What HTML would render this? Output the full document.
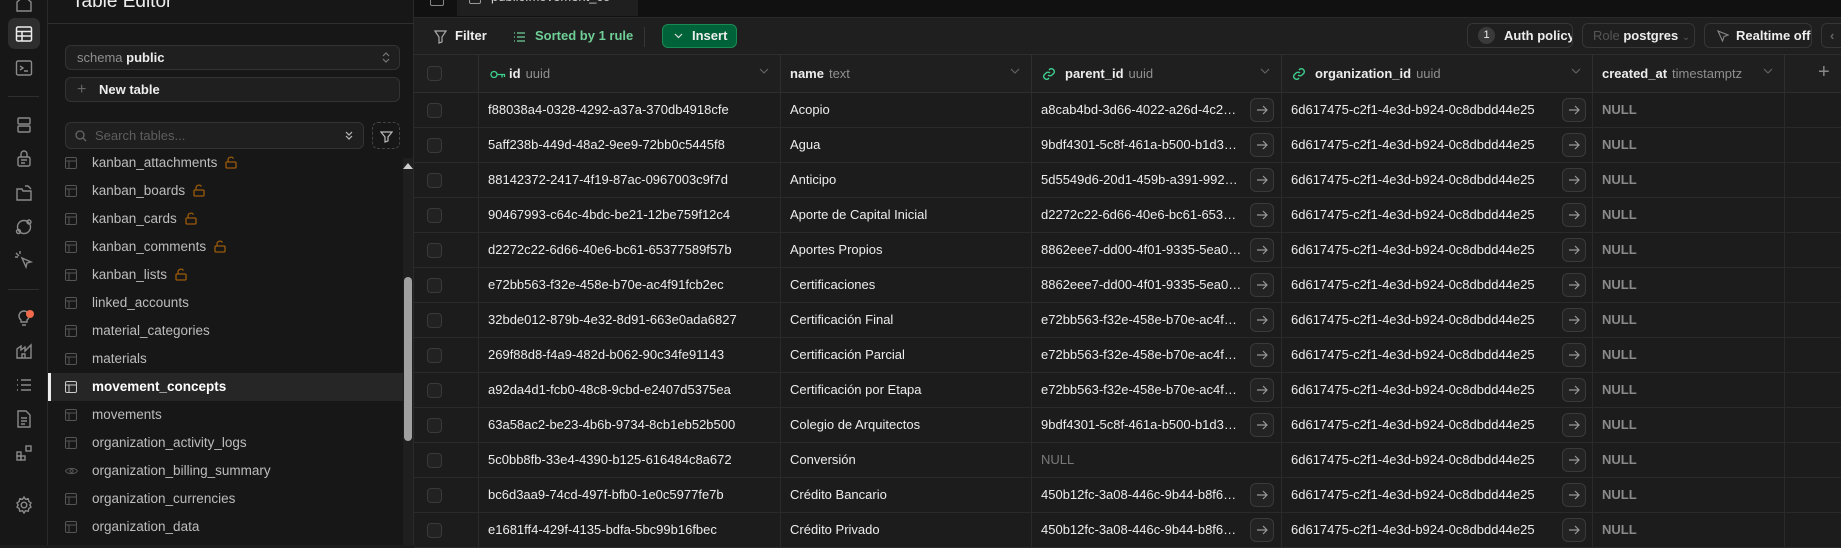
<!DOCTYPE html>
<html><head><meta charset="utf-8"><style>
*{box-sizing:border-box;margin:0;padding:0}
body{width:1841px;height:545px;overflow:hidden;background:#1c1c1c;font-family:"Liberation Sans",sans-serif;color:#ededed;position:relative}
.abs{position:absolute}
.rail{left:0;top:0;width:48px;height:545px;background:#171717;border-right:1px solid #2a2a2a}
.ri{position:absolute;left:14px;width:20px;height:20px}
.panel{left:48px;top:0;width:366px;height:545px;background:#171717;border-right:1px solid #2a2a2a}
.box{position:absolute;background:#1f1f1f;border:1px solid #333;border-radius:6px;font-size:13px}
.item{position:absolute;left:0;width:355px;height:28px;font-size:13.5px;color:#bdbdbd;line-height:28px;padding-left:44px;white-space:nowrap}
.item .ti{position:absolute;top:8px}
.lock{display:inline-block;margin-left:8px;vertical-align:-2px;position:static}
.main{left:414px;top:0;width:1427px;height:545px;background:#1c1c1c}
.tabbar{left:414px;top:0;width:1427px;height:18px;background:#111;border-bottom:1px solid #2a2a2a}
.toolbar{left:414px;top:18px;width:1427px;height:37px;background:#1f1f1f;border-bottom:1px solid #2e2e2e}
.btn{position:absolute;top:23px;height:25px;border:1px solid #363636;border-radius:6px;font-size:13px;line-height:23px;color:#ededed;font-weight:bold;background:#1f1f1f;white-space:nowrap;overflow:hidden}
.hdr{left:414px;top:55px;width:1427px;height:38px;background:#1f1f1f;border-bottom:1px solid #2e2e2e}
.col{position:absolute;top:0;height:100%;border-right:1px solid #2e2e2e}
.row{position:absolute;left:414px;width:1427px;height:35px;border-bottom:1px solid #2a2a2a;font-size:13px}
.c{position:absolute;top:0;height:35px;line-height:34px;border-right:1px solid #2a2a2a;padding-left:9px;white-space:nowrap;overflow:hidden}
.cb{position:absolute;left:13px;top:10px;width:15px;height:15px;border:1px solid #3a3a3a;border-radius:4px;background:#222}
.ar{position:absolute;top:5px;width:24px;height:24px;border:1px solid #3a3a3a;border-radius:6px;background:#232323}
.ar svg{position:absolute;left:5px;top:5px}
.null{color:#7a7a7a}
.hc{font-size:13px;font-weight:bold;line-height:37px;padding-left:9px;position:absolute;top:0;white-space:nowrap}
.hc span{font-weight:normal;color:#8f8f8f;margin-left:5px}
.chev{position:absolute;top:13px}
.tr{display:inline-block;width:202px;overflow:hidden;text-overflow:ellipsis;vertical-align:top}
</style></head><body>
<div class="abs rail">
 <svg class="ri" style="top:-7px" viewBox="0 0 20 20" fill="none" stroke="#8a8a8a" stroke-width="1.4"><path d="M3 9l7-6 7 6v9H3z"/></svg>
 <div class="abs" style="left:8px;top:18px;width:32px;height:31px;background:#2e2e2e;border-radius:7px"></div>
 <svg class="ri" style="top:24px" viewBox="0 0 20 20" fill="none" stroke="#ededed" stroke-width="1.5"><rect x="2.5" y="3" width="15" height="14" rx="1.5"/><path d="M2.5 7.5h15M2.5 12h15M8 7.5V17"/></svg>
 <svg class="ri" style="top:58px" viewBox="0 0 20 20" fill="none" stroke="#8a8a8a" stroke-width="1.4"><rect x="2.5" y="3" width="15" height="14" rx="1.5"/><path d="M6 8l3 2-3 2M10 13h4"/></svg>
 <div class="abs" style="left:8px;top:96px;width:31px;height:1px;background:#2e2e2e"></div>
 <svg class="ri" style="top:115px" viewBox="0 0 20 20" fill="none" stroke="#8a8a8a" stroke-width="1.4"><rect x="4" y="3" width="12" height="6" rx="1"/><rect x="4" y="11" width="12" height="6" rx="1"/></svg>
 <svg class="ri" style="top:148px" viewBox="0 0 20 20" fill="none" stroke="#8a8a8a" stroke-width="1.4"><rect x="4" y="9" width="12" height="9" rx="1.5"/><path d="M7 9V6a3 3 0 016 0v3M7 12h6M7 15h4"/></svg>
 <svg class="ri" style="top:183px" viewBox="0 0 20 20" fill="none" stroke="#8a8a8a" stroke-width="1.4"><path d="M3 6h5l1 2h8v9H3zM11 3h3l3 3"/></svg>
 <svg class="ri" style="top:217px" viewBox="0 0 20 20" fill="none" stroke="#8a8a8a" stroke-width="1.4"><circle cx="10" cy="10" r="6.5"/><circle cx="15" cy="5" r="2"/><circle cx="4.5" cy="14.5" r="2"/></svg>
 <svg class="ri" style="top:250px" viewBox="0 0 20 20" fill="none" stroke="#8a8a8a" stroke-width="1.4"><path d="M8 8l9 4-4 1-1 4zM2 3l3 3M6 1v3M1 7h3"/></svg>
 <div class="abs" style="left:8px;top:289px;width:31px;height:1px;background:#2e2e2e"></div>
 <svg class="ri" style="top:307px" viewBox="0 0 20 20" fill="none" stroke="#8a8a8a" stroke-width="1.4"><path d="M7 13a5 5 0 116 0v2H7zM8 18h4"/></svg>
 <div class="abs" style="left:26px;top:310px;width:8px;height:8px;border-radius:50%;background:#f06a4b"></div>
 <svg class="ri" style="top:341px" viewBox="0 0 20 20" fill="none" stroke="#8a8a8a" stroke-width="1.4"><path d="M3 17V8l4-3v4l4-3v4l6-6v13zM8 17v-4h3v4"/></svg>
 <svg class="ri" style="top:375px" viewBox="0 0 20 20" fill="none" stroke="#8a8a8a" stroke-width="1.4"><path d="M3 5h1M3 10h1M3 15h1M7 5h10M7 10h10M7 15h10"/></svg>
 <svg class="ri" style="top:409px" viewBox="0 0 20 20" fill="none" stroke="#8a8a8a" stroke-width="1.4"><path d="M4 2h8l4 4v12H4zM7 9h6M7 12h6M7 15h4"/></svg>
 <svg class="ri" style="top:443px" viewBox="0 0 20 20" fill="none" stroke="#8a8a8a" stroke-width="1.4"><rect x="3" y="9" width="4" height="4"/><rect x="3" y="13" width="4" height="4"/><rect x="7" y="13" width="4" height="4"/><rect x="12" y="3" width="5" height="5"/></svg>
 <svg class="ri" style="top:495px" viewBox="0 0 20 20" fill="none" stroke="#8a8a8a" stroke-width="1.4"><circle cx="10" cy="10" r="2.8"/><path d="M10 2l1.5 2.3 2.7-.6.6 2.7L17 8l-1.2 2 1.2 2-2.2 1.6-.6 2.7-2.7-.6L10 18l-1.5-2.3-2.7.6-.6-2.7L3 12l1.2-2L3 8l2.2-1.6.6-2.7 2.7.6z"/></svg>
</div>
<div class="abs panel">
 <div class="abs" style="left:0;top:0;width:366px;height:24px;border-bottom:1px solid #2e2e2e"></div>
 <div class="abs" style="left:24px;top:-9px;font-size:19px;color:#ededed">Table Editor</div>
 <div class="box" style="left:17px;top:45px;width:335px;height:25px;line-height:23px;padding-left:11px"><span style="color:#8f8f8f">schema</span> <b>public</b>
  <svg class="abs" style="right:8px;top:5px" width="10" height="13" viewBox="0 0 10 13" fill="none" stroke="#777" stroke-width="1.2"><path d="M2 5l3-3 3 3M2 8l3 3 3-3"/></svg></div>
 <div class="box" style="left:17px;top:77px;width:335px;height:25px;line-height:23px;padding-left:33px;font-weight:bold">New table
  <span class="abs" style="left:11px;top:0;color:#666;font-weight:normal;font-size:16px">+</span></div>
 <div class="box" style="left:17px;top:122px;width:299px;height:27px;line-height:25px;padding-left:29px;color:#5e5e5e">Search tables...
  <svg class="abs" style="left:9px;top:7px" width="12" height="12" viewBox="0 0 12 12" fill="none" stroke="#666" stroke-width="1.3"><circle cx="5" cy="5" r="4"/><path d="M8 8l3 3"/></svg>
  <svg class="abs" style="right:9px;top:7px" width="10" height="12" viewBox="0 0 10 12" fill="none" stroke="#bbb" stroke-width="1.2"><path d="M2 2l3 3 3-3M2 6l3 3 3-3"/></svg></div>
 <div class="abs" style="left:324px;top:122px;width:28px;height:27px;border:1px dashed #444;border-radius:6px">
  <svg class="abs" style="left:7px;top:7px" width="13" height="13" viewBox="0 0 13 13" fill="none" stroke="#bbb" stroke-width="1.2"><path d="M1 2h11L8 7v4l-3 1V7z"/></svg></div>
 <div class="abs" style="left:355px;top:158px;width:10px;height:387px;background:#1f1f1f"></div>
 <div class="abs" style="left:356px;top:277px;width:8px;height:164px;background:#a0a0a0;border-radius:4px"></div>
 <div class="abs" style="left:355px;top:163px;width:0;height:0;border-left:5px solid transparent;border-right:5px solid transparent;border-bottom:6px solid #ccc"></div>
 <div id="list"></div>
</div>
<div class="abs tabbar"></div>
<div class="abs" style="left:430px;top:-8px;width:14px;height:14px;border:1.4px solid #888;border-radius:2px"></div>
<div class="abs" style="left:457px;top:0;width:181px;height:16px;background:#1f1f1f;overflow:hidden"><div style="position:absolute;left:12px;top:-8px;width:12px;height:12px;border:1.4px solid #999;border-radius:2px"></div><div style="position:absolute;left:34px;top:-11px;font-size:13px;color:#ccc;white-space:nowrap">public.movement_co</div></div>
<div class="abs toolbar"></div>
<svg class="abs" style="left:434px;top:30px" width="13" height="14" viewBox="0 0 13 14" fill="none" stroke="#aaa" stroke-width="1.2"><path d="M1 1h11L8 7v5l-3 1V7z"/></svg>
<div class="abs" style="left:455px;top:28px;font-size:13px;font-weight:bold;color:#ededed">Filter</div>
<svg class="abs" style="left:513px;top:31px" width="13" height="12" viewBox="0 0 13 12" fill="none" stroke="#6fcf97" stroke-width="1.2"><path d="M1 2h1M1 6h1M1 10h1M4 2h8M4 6h8M4 10h8"/></svg>
<div class="abs" style="left:535px;top:28px;font-size:13px;font-weight:bold;color:#6fcf97">Sorted by 1 rule</div>
<div class="abs" style="left:644px;top:27px;width:1px;height:20px;background:#363636"></div>
<div class="abs" style="left:662px;top:24px;width:75px;height:24px;background:#006239;border:1px solid #1a8a55;border-radius:6px;font-size:13px;font-weight:bold;line-height:22px;padding-left:29px;color:#ededed">Insert
 <svg class="abs" style="left:11px;top:8px" width="9" height="6" viewBox="0 0 9 6" fill="none" stroke="#ddd" stroke-width="1.2"><path d="M1 1l3.5 3.5L8 1"/></svg></div>
<div class="btn" style="left:1467px;width:106px;padding-left:36px">Auth policy<div class="abs" style="left:10px;top:3px;width:17px;height:17px;border-radius:50%;background:#3a3a3a;font-size:11px;line-height:17px;text-align:center;font-weight:normal">1</div></div>
<div class="btn" style="left:1582px;width:113px;padding-left:10px"><span style="color:#555;font-weight:normal">Role</span> postgres <span style="color:#555;font-weight:normal;font-size:10px">&#8964;</span></div>
<div class="btn" style="left:1704px;width:108px;padding-left:31px">Realtime off<svg class="abs" style="left:12px;top:6px" width="12" height="12" viewBox="0 0 12 12" fill="none" stroke="#888" stroke-width="1.1"><path d="M1 1l10 4-4 1.5L5.5 11z"/></svg></div>
<div class="btn" style="left:1821px;width:40px;padding-left:8px;color:#666">&lsaquo;</div>
<div class="abs hdr">
 <div class="col" style="left:0;width:65px"><div class="cb" style="top:11px"></div></div>
 <div class="col" style="left:65px;width:302px"></div>
 <div class="col" style="left:367px;width:251px"></div>
 <div class="col" style="left:618px;width:250px"></div>
 <div class="col" style="left:868px;width:311px"></div>
 <div class="col" style="left:1179px;width:192px"></div>
 <svg class="abs" style="left:76px;top:15px" width="16" height="9" viewBox="0 0 16 9" fill="none" stroke="#3ecf8e" stroke-width="1.3"><circle cx="4" cy="4.5" r="3"/><path d="M7 4.5h8M12 4.5v3M14.5 4.5v2.5"/></svg>
 <div class="hc" style="left:86px">id<span>uuid</span></div>
 <div class="hc" style="left:367px">name<span>text</span></div>
 <svg class="abs" style="left:628px;top:12px" width="14" height="14" viewBox="0 0 14 14" fill="none" stroke="#3ecf8e" stroke-width="1.4"><path d="M6 8a3 3 0 004 0l2-2a3 3 0 00-4-4L7 3M8 6a3 3 0 00-4 0L2 8a3 3 0 004 4l1-1"/></svg>
 <div class="hc" style="left:642px">parent_id<span>uuid</span></div>
 <svg class="abs" style="left:878px;top:12px" width="14" height="14" viewBox="0 0 14 14" fill="none" stroke="#3ecf8e" stroke-width="1.4"><path d="M6 8a3 3 0 004 0l2-2a3 3 0 00-4-4L7 3M8 6a3 3 0 00-4 0L2 8a3 3 0 004 4l1-1"/></svg>
 <div class="hc" style="left:892px">organization_id<span>uuid</span></div>
 <div class="hc" style="left:1179px">created_at<span>timestamptz</span></div>
 <svg class="chev" style="left:345px" width="10" height="6" viewBox="0 0 10 6" fill="none" stroke="#666" stroke-width="1.1"><path d="M1 1l4 4 4-4"/></svg>
 <svg class="chev" style="left:596px" width="10" height="6" viewBox="0 0 10 6" fill="none" stroke="#666" stroke-width="1.1"><path d="M1 1l4 4 4-4"/></svg>
 <svg class="chev" style="left:846px" width="10" height="6" viewBox="0 0 10 6" fill="none" stroke="#666" stroke-width="1.1"><path d="M1 1l4 4 4-4"/></svg>
 <svg class="chev" style="left:1157px" width="10" height="6" viewBox="0 0 10 6" fill="none" stroke="#666" stroke-width="1.1"><path d="M1 1l4 4 4-4"/></svg>
 <svg class="chev" style="left:1349px" width="10" height="6" viewBox="0 0 10 6" fill="none" stroke="#666" stroke-width="1.1"><path d="M1 1l4 4 4-4"/></svg>
 <div class="abs" style="left:1404px;top:6px;font-size:20px;color:#888">+</div>
</div>
<div id="rows"></div>
<script>
var items=[["kanban_attachments",1],["kanban_boards",1],["kanban_cards",1],["kanban_comments",1],["kanban_lists",1],["linked_accounts"],["material_categories"],["materials"],["movement_concepts",0,1],["movements"],["organization_activity_logs"],["organization_billing_summary",0,0,1],["organization_currencies"],["organization_data"]];
function tbl(c,l){return '<svg class="ti" style="left:'+l+'px" width="12" height="12" viewBox="0 0 12 12" fill="none" stroke="'+c+'" stroke-width="1"><rect x=".5" y=".5" width="11" height="11" rx="1.5"/><path d="M.5 4h11M4 4v7.5"/></svg>';}
var eye='<svg class="ti" style="left:17px" width="13" height="12" viewBox="0 0 13 12" fill="none" stroke="#555" stroke-width="1"><path d="M.5 6C2.5 2.5 10.5 2.5 12.5 6 10.5 9.5 2.5 9.5.5 6z"/><circle cx="6.5" cy="6" r="1.5"/></svg>';
var lock='<svg class="lock" width="12" height="13" viewBox="0 0 12 13" fill="none" stroke="#9a5a0a" stroke-width="1.3"><rect x="1" y="6" width="10" height="6" rx="1"/><path d="M3 6V4a3 3 0 015.5-1.5"/></svg>';
var h='';items.forEach(function(it,i){var t=149+28*i;
h+='<div class="item" style="top:'+t+'px;'+(it[2]?'background:#262626;color:#fff;font-weight:bold;border-left:3px solid #ededed;padding-left:41px':'')+'">'+(it[3]?eye:(it[2]?tbl('#ccc',14):tbl('#555',17)))+it[0]+(it[1]?lock:'')+'</div>';});
document.getElementById('list').innerHTML=h;
var rows=[["f88038a4-0328-4292-a37a-370db4918cfe","Acopio","a8cab4bd-3d66-4022-a26d-4c20a1b2c3d4"],
["5aff238b-449d-48a2-9ee9-72bb0c5445f8","Agua","9bdf4301-5c8f-461a-b500-b1d38a1b2c3d"],
["88142372-2417-4f19-87ac-0967003c9f7d","Anticipo","5d5549d6-20d1-459b-a391-9929a1b2c3d4"],
["90467993-c64c-4bdc-be21-12be759f12c4","Aporte de Capital Inicial","d2272c22-6d66-40e6-bc61-65377589f57b"],
["d2272c22-6d66-40e6-bc61-65377589f57b","Aportes Propios","8862eee7-dd00-4f01-9335-5ea00a1b2c3d"],
["e72bb563-f32e-458e-b70e-ac4f91fcb2ec","Certificaciones","8862eee7-dd00-4f01-9335-5ea00a1b2c3d"],
["32bde012-879b-4e32-8d91-663e0ada6827","Certificación Final","e72bb563-f32e-458e-b70e-ac4f91fcb2ec"],
["269f88d8-f4a9-482d-b062-90c34fe91143","Certificación Parcial","e72bb563-f32e-458e-b70e-ac4f91fcb2ec"],
["a92da4d1-fcb0-48c8-9cbd-e2407d5375ea","Certificación por Etapa","e72bb563-f32e-458e-b70e-ac4f91fcb2ec"],
["63a58ac2-be23-4b6b-9734-8cb1eb52b500","Colegio de Arquitectos","9bdf4301-5c8f-461a-b500-b1d38a1b2c3d"],
["5c0bb8fb-33e4-4390-b125-616484c8a672","Conversión",null],
["bc6d3aa9-74cd-497f-bfb0-1e0c5977fe7b","Crédito Bancario","450b12fc-3a08-446c-9b44-b8f69a1b2c3d"],
["e1681ff4-429f-4135-bdfa-5bc99b16fbec","Crédito Privado","450b12fc-3a08-446c-9b44-b8f69a1b2c3d"]];
var arr='<svg width="12" height="12" viewBox="0 0 12 12" fill="none" stroke="#999" stroke-width="1.2"><path d="M1 6h10M7 2l4 4-4 4"/></svg>';
var r='';rows.forEach(function(x,i){var t=93+35*i;
r+='<div class="row" style="top:'+t+'px"><div class="c" style="left:0;width:65px"><div class="cb"></div></div>'+
'<div class="c" style="left:65px;width:302px">'+x[0]+'</div><div class="c" style="left:367px;width:251px">'+x[1]+'</div>'+
'<div class="c" style="left:618px;width:250px">'+(x[2]?'<span class="tr">'+x[2]+'</span><div class="ar" style="left:218px">'+arr+'</div>':'<span class="null">NULL</span>')+'</div>'+
'<div class="c" style="left:868px;width:311px">6d617475-c2f1-4e3d-b924-0c8dbdd44e25<div class="ar" style="left:280px">'+arr+'</div></div>'+
'<div class="c" style="left:1179px;width:192px;color:#8a8a8a;font-weight:bold">NULL</div></div>';});
document.getElementById('rows').innerHTML=r;
</script>
</body></html>
